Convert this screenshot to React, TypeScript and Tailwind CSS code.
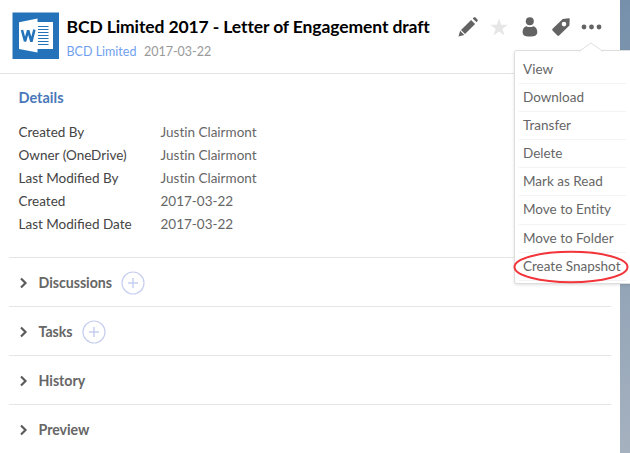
import React from "react";

const details = [
  ["Created By", "Justin Clairmont"],
  ["Owner (OneDrive)", "Justin Clairmont"],
  ["Last Modified By", "Justin Clairmont"],
  ["Created", "2017-03-22"],
  ["Last Modified Date", "2017-03-22"],
];

const sections = [
  { name: "Discussions", add: true },
  { name: "Tasks", add: true },
  { name: "History", add: false },
  { name: "Preview", add: false },
];

const menu = [
  "View",
  "Download",
  "Transfer",
  "Delete",
  "Mark as Read",
  "Move to Entity",
  "Move to Folder",
  "Create Snapshot",
];

function WordLogo() {
  return (
    <svg className="block size-[47px] shrink-0" viewBox="0 0 47 47">
      <rect x=".5" y=".5" width="46.500" height="46.500" fill="#2372ba" />
      <path d="M25 10h16v27H25z" fill="#fff" />
      <path
        d="M26 14.500h10.500M26 17.500h10.500M26 20.500h10.500M26 23.500h10.500M26 26.500h10.500M26 29.500h10.500M26 32.500h10.500"
        stroke="#2372ba"
        strokeWidth="1.200"
      />
      <path d="M7 10.200L25.500 6.500v34L7 37z" fill="#fff" />
      <path
        d="M10 18l3 11.300 3.200-11 3.200 11.300 3-12"
        fill="none"
        stroke="#2372ba"
        strokeWidth="2.500"
        strokeLinejoin="bevel"
      />
    </svg>
  );
}

function Toolbar() {
  return (
    <svg className="block h-[30px] w-[150px] shrink-0" viewBox="455 11 150 30" fill="#636363">
      <path d="M458.500 35.500l1.600-5.800 4.200 4.200zM461 28.900l10.100-9.900 4 4-10.100 9.900zM472.700 17.600l1-1c.6-.5 1.300-.5 1.900 0l1.800 1.900c.5.6.5 1.200 0 1.800l-.9 1z" />
      <path
        d="M499 17.300l2.100 6.500h6.800l-5.500 4 2.100 6.700-5.500-4.100-5.500 4.100 2.100-6.700-5.500-4h6.800z"
        fill="#e6e6e6"
      />
      <circle cx="529.800" cy="20.300" r="4" />
      <path d="M526.300 25.200c2.300 1.200 4.800 1.200 7.100 0 2.400.7 3.900 2.800 3.900 5.700 0 3-2 4.600-7.500 4.600s-7.200-1.600-7.200-4.600c0-2.900 1.400-5 3.700-5.700z" />
      <path
        fillRule="evenodd"
        d="M562.700 18l6-.8c.7 0 1 .3 1 1l-.3 6.300-10.300 10c-.6.500-1.200.5-1.700 0l-4.900-5c-.5-.6-.4-1.200.1-1.700zM564 20.800a2.300 2.300 0 1 0 0 4.600 2.300 2.300 0 0 0 0-4.600z"
      />
      <circle cx="584" cy="26" r="2.400" />
      <circle cx="591.500" cy="26" r="2.400" />
      <circle cx="599" cy="26" r="2.400" />
    </svg>
  );
}

export default function App() {
  return (
    <div className="relative flex h-[453px] w-[630px] overflow-hidden bg-white font-['Lato',sans-serif] text-[13.5px] text-[#666]">
      <main className="flex w-[620px] flex-col">
        <header className="flex h-[74px] shrink-0 border-b border-[#e3e3e3] pt-3 pl-3">
          <WordLogo />
          <div className="ml-[7.500px] flex w-[388.500px] flex-col whitespace-nowrap">
            <h1 className="mt-[3px] h-6 text-[17.500px] leading-6 font-bold tracking-[-0.110px] text-black">
              BCD Limited 2017 - Letter of Engagement draft
            </h1>
            <div className="mt-[3px] flex h-5 gap-[7.500px] text-[12.500px] leading-5">
              <a className="text-[#6fa1f0]">BCD Limited</a>
              <span className="text-[#999]">2017-03-22</span>
            </div>
          </div>
          <Toolbar />
        </header>

        <section className="h-[183px] shrink-0 pt-[14px] pl-[18.500px]">
          <h2 className="h-5 text-[14.500px] leading-5 font-bold text-[#4a78b8]">Details</h2>
          <dl className="mt-[13px]">
            {details.map(([label, value]) => (
              <div key={label} className="flex h-[23px] leading-[23px]">
                <dt className="w-[142px] text-[#444]">{label}</dt>
                <dd className="[font-variant-ligatures:none]">{value}</dd>
              </div>
            ))}
          </dl>
        </section>

        {sections.map(({ name, add }) => (
          <section
            key={name}
            className="mr-[9px] ml-[9px] flex h-[49px] shrink-0 items-center border-t border-[#e5e5e5] pt-px pl-[11px]"
          >
            <svg className="h-3 w-2" viewBox="0 0 8 12">
              <path d="M1 1.500L5.500 6L1 10.500" fill="none" stroke="#5c5c5c" strokeWidth="2.200" />
            </svg>
            <h3 className="ml-[10.500px] text-[14.200px] leading-5 font-bold tracking-[-0.030px]">{name}</h3>
            {add && (
              <svg className="ml-[9px] size-6" viewBox="0 0 24 24" fill="none" stroke="#c7cff0">
                <circle cx="12" cy="12" r="11" strokeWidth="1.200" />
                <path d="M12 7v10M7 12h10" strokeWidth="1.500" />
              </svg>
            )}
          </section>
        ))}
      </main>
      <aside className="w-[10px] bg-linear-to-b from-[#7690ab] to-[#a5b1bf]" />

      <nav className="absolute top-[50px] left-[514px] h-[234px] w-[120px] rounded-[3px] border border-[#dedede] bg-white pt-[5px] pr-[7px] pl-1 shadow-[0_1px_3px_rgba(0,0,0,0.12)]">
        <svg className="absolute -top-[9px] left-[64px] h-[10px] w-6" viewBox="0 0 24 10">
          <path d="M0 9.500L12 1L24 9.500V10H0z" fill="#fff" />
          <path d="M0 9.500L12 1L24 9.500" fill="none" stroke="#dedede" />
        </svg>
        {menu.map((item) => (
          <div
            key={item}
            className="h-[28.100px] border-b border-[#f3f3f3] pl-1 leading-[27px] whitespace-nowrap [font-variant-ligatures:none]"
          >
            {item}
          </div>
        ))}
      </nav>
      <svg className="absolute top-[248px] left-[511px] h-[38px] w-[119px]" viewBox="0 0 119 38">
        <ellipse cx="60" cy="19" rx="56.500" ry="15.200" fill="none" stroke="#f2353b" strokeWidth="2" />
      </svg>
    </div>
  );
}
